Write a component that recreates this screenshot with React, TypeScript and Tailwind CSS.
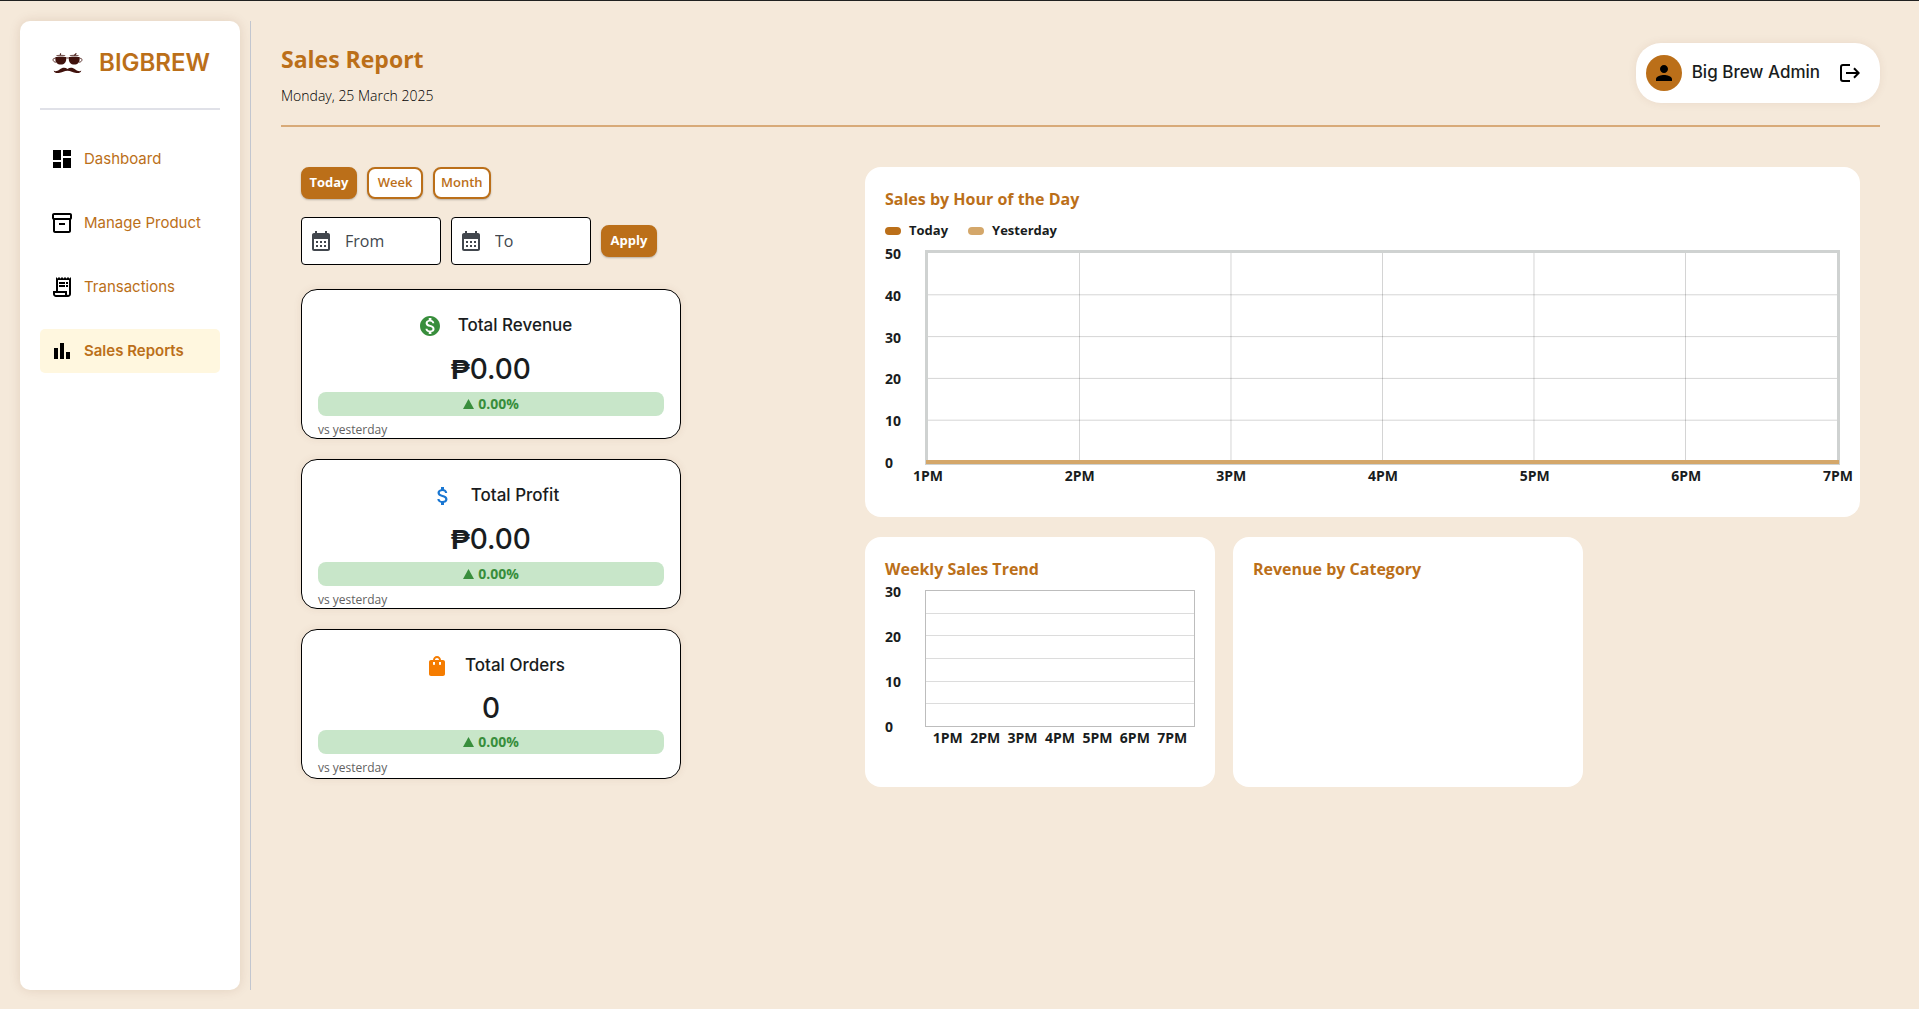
import type { ReactNode } from "react";
import type { IconType } from "react-icons";
import {
  MdAttachMoney,
  MdBarChart,
  MdCalendarMonth,
  MdDashboard,
  MdMonetizationOn,
  MdOutlineInventory2,
  MdOutlineReceiptLong,
  MdPerson,
  MdShoppingBag,
} from "react-icons/md";

const HOURS = ["1PM", "2PM", "3PM", "4PM", "5PM", "6PM", "7PM"];

const NAV: { label: string; icon: IconType; active?: boolean }[] = [
  { label: "Dashboard", icon: MdDashboard },
  { label: "Manage Product", icon: MdOutlineInventory2 },
  { label: "Transactions", icon: MdOutlineReceiptLong },
  { label: "Sales Reports", icon: MdBarChart, active: true },
];

function Logo() {
  return (
    <svg viewBox="0 0 92 64" className="h-[21px] w-[31px] shrink-0" fill="#40120d" aria-hidden="true">
      <path d="M9 12h33v6c0 10-6 17-16.500 17S9 28 9 18z" />
      <path d="M50 12h33v6c0 10-6 17-16.500 17S50 28 50 18z" />
      <ellipse cx="25.500" cy="8" rx="14" ry="2.500" opacity="0.7" />
      <ellipse cx="66.500" cy="8" rx="14" ry="2.500" opacity="0.7" />
      <path d="M9 17c-5-2-7 1-7 4s3 7 9 7M83 17c5-2 7 1 7 4s-3 7-9 7" fill="none" stroke="#40120d" strokeWidth="2.500" />
      <path d="M24 6l1-5M67 7l6-6" fill="none" stroke="#40120d" strokeWidth="3.500" />
      <path d="M42 14h8v2.500h-8z" />
      <path d="M4 53c5 5 12 1 18-3 8-6 17-7 24-1 7-6 16-5 24 1 6 4 13 8 18 3-1 7-8 9-15 8-10-1-18-7-27-7s-17 6-27 7c-7 1-14-1-15-8z" />
    </svg>
  );
}

function LogoutIcon() {
  return (
    <svg viewBox="0 0 20 18" className="h-[18px] w-5" fill="none" stroke="currentColor" strokeWidth="2" aria-hidden="true">
      <path d="M10 1H3a2 2 0 0 0-2 2v12a2 2 0 0 0 2 2h7" />
      <path d="M6 9h12M14 4.300L18.600 9 14 13.700" />
    </svg>
  );
}

function Sidebar() {
  return (
    <aside className="flex w-[220px] shrink-0 flex-col rounded-[10px] bg-white p-5 font-['Inter',sans-serif] shadow-[0_0_12px_rgba(100,50,0,0.13)]">
      <div className="flex h-11 items-center justify-between pr-2.5 pl-3">
        <Logo />
        <span className="text-2xl font-semibold text-[#bb6f19]">BIGBREW</span>
      </div>
      <hr className="mt-[23px] border-t-2 border-[#e0e1e8]" />
      <nav className="mt-[27px] flex flex-col gap-5">
        {NAV.map(({ label, icon: Icon, active }) => (
          <a
            key={label}
            href="#"
            className={`flex h-11 items-center gap-2.5 rounded-[5px] px-2.5 text-[15px] whitespace-nowrap text-[#bb6f19] ${
              active ? "bg-[#fff7df] font-semibold" : ""
            }`}
          >
            <Icon className="size-6 text-black" aria-hidden="true" />
            {label}
          </a>
        ))}
      </nav>
    </aside>
  );
}

function Header() {
  return (
    <header className="flex items-start justify-between border-b-2 border-[#d8aa78] pt-[22px] pb-[17px]">
      <div>
        <h1 className="text-[23px] leading-8 font-bold text-[#bb6f19]">Sales Report</h1>
        <p className="mt-[9px] text-sm leading-6 font-light text-black">Monday, 25 March 2025</p>
      </div>
      <div className="flex h-[60px] items-center rounded-[25px] bg-white pr-5 pl-2.5 font-['Inter',sans-serif] shadow-[0_0_10px_rgba(100,50,0,0.08)]">
        <span className="flex size-9 items-center justify-center rounded-full bg-[#bb6f19]">
          <MdPerson className="size-6 text-black" aria-hidden="true" />
        </span>
        <span className="ml-2.5 text-[17px] font-medium text-[#191c20]">Big Brew Admin</span>
        <button type="button" aria-label="Log out" className="ml-5 text-black">
          <LogoutIcon />
        </button>
      </div>
    </header>
  );
}

function ActionButton({ children, filled }: { children: ReactNode; filled?: boolean }) {
  return (
    <button
      type="button"
      className={`h-8 min-w-14 rounded-lg border-2 border-[#bb6f19] px-1.5 text-[13px] shadow-[0_1px_2px_rgba(0,0,0,0.25)] ${
        filled ? "bg-[#bb6f19] font-bold text-white" : "bg-white font-semibold text-[#bb6f19]"
      }`}
    >
      {children}
    </button>
  );
}

function DateField({ label }: { label: string }) {
  return (
    <label className="flex h-12 w-[140px] items-center gap-3 rounded border border-black bg-white px-[7px]">
      <MdCalendarMonth className="size-6 shrink-0 text-[#42474e]" aria-hidden="true" />
      <input
        type="text"
        aria-label={label}
        placeholder={label}
        className="w-full min-w-0 bg-transparent text-base text-[#42474e] outline-none placeholder:text-[#42474e]"
      />
    </label>
  );
}

function StatCard({
  icon: Icon,
  iconClass,
  title,
  amount,
  peso,
}: {
  icon: IconType;
  iconClass: string;
  title: string;
  amount: string;
  peso?: boolean;
}) {
  return (
    <section className="flex min-h-[150px] w-[380px] flex-col rounded-2xl border border-black bg-white px-4 pt-4 shadow-[0_0_8px_rgba(100,50,0,0.08)]">
      <div className="flex h-10 items-center justify-center gap-4 pl-2 font-['Inter',sans-serif]">
        <Icon className={`size-6 ${iconClass}`} aria-hidden="true" />
        <h2 className="text-[17px] font-medium text-[#191c20]">{title}</h2>
      </div>
      <p
        className={`mt-0.5 text-center font-['Inter',sans-serif] text-[28px] font-medium text-[#191c20] ${
          peso ? "leading-[42px]" : "leading-10"
        }`}
      >
        {peso && <span className="font-['Open_Sans',sans-serif] leading-none font-bold">₱</span>}
        {amount}
      </p>
      <div className="mt-0.5 flex h-6 items-center justify-center gap-1 rounded-lg bg-[#c8e6c9] text-sm font-bold text-[#388e3c]">
        <svg viewBox="0 0 11 10" className="h-2.5 w-[11px]" fill="currentColor" aria-hidden="true">
          <path d="M5.500 0L11 10H0z" />
        </svg>
        0.00%
      </div>
      <p className="mt-1.5 text-xs leading-4 text-[#616161]">vs yesterday</p>
    </section>
  );
}

function PanelTitle({ children }: { children: ReactNode }) {
  return <h2 className="text-base leading-6 font-bold text-[#bb6f19]">{children}</h2>;
}

function Legend({ color, label }: { color: string; label: string }) {
  return (
    <li className="flex items-center gap-2">
      <span className={`h-2 w-4 rounded ${color}`} />
      {label}
    </li>
  );
}

function YAxis({ labels, className }: { labels: string[]; className: string }) {
  return (
    <div className={`flex w-10 shrink-0 flex-col justify-between ${className}`}>
      {labels.map((l) => (
        <span key={l} className="leading-4">
          {l}
        </span>
      ))}
    </div>
  );
}

function HourlyChart() {
  return (
    <section className="rounded-2xl bg-white px-5 pt-5 pb-[31px]">
      <PanelTitle>Sales by Hour of the Day</PanelTitle>
      <ul className="mt-2 flex h-6 gap-5 text-[13px] font-bold text-[#191c20]">
        <Legend color="bg-[#bb6f19]" label="Today" />
        <Legend color="bg-[#d4a76a]" label="Yesterday" />
      </ul>
      <div className="mt-[3px] text-sm font-bold text-[#191c20]">
        <div className="flex">
          <YAxis labels={["50", "40", "30", "20", "10", "0"]} className="h-[225px]" />
          <div className="mt-1 h-[215px] flex-1 border-3 border-[#cfd2d1]">
            <svg width="100%" height="209" className="block overflow-visible" aria-hidden="true">
              {[1, 2, 3, 4, 5].map((i) => (
                <line key={`v${i}`} x1={`${(i * 100) / 6}%`} x2={`${(i * 100) / 6}%`} y1="0" y2="100%" stroke="#000" strokeOpacity="0.17" />
              ))}
              {[1, 2, 3, 4].map((i) => (
                <line key={`h${i}`} x1="0" x2="100%" y1={`${i * 20}%`} y2={`${i * 20}%`} stroke="#000" strokeOpacity="0.17" />
              ))}
              <line x1="0" x2="100%" y1="209" y2="209" stroke="#d4a76a" strokeWidth="4" strokeLinecap="square" />
            </svg>
          </div>
        </div>
        <div className="-mt-[5px] -mr-3.5 ml-[27px] flex justify-between">
          {HOURS.map((h) => (
            <span key={h} className="w-8 text-center leading-5">
              {h}
            </span>
          ))}
        </div>
      </div>
    </section>
  );
}

function WeeklyChart() {
  return (
    <section className="h-[250px] w-[350px] rounded-2xl bg-white p-5">
      <PanelTitle>Weekly Sales Trend</PanelTitle>
      <div className="mt-[3px] text-sm font-bold text-[#191c20]">
        <div className="flex">
          <YAxis labels={["30", "20", "10", "0"]} className="h-[151px]" />
          <div className="mt-1.5 flex h-[137px] flex-1 flex-col divide-y divide-[#dcdcdc] border border-[#bdbdbd]">
            {[0, 1, 2, 3, 4, 5].map((i) => (
              <div key={i} className="flex-1" />
            ))}
          </div>
        </div>
        <div className="-mt-[7px] ml-10 grid grid-cols-7 px-1">
          {HOURS.map((h) => (
            <span key={h} className="text-center leading-5">
              {h}
            </span>
          ))}
        </div>
      </div>
    </section>
  );
}

export default function App() {
  return (
    <div className="flex min-h-screen border-t border-[#202020] bg-[#f5e9da] py-5 pr-[39px] pb-[19px] pl-5 font-['Open_Sans','Noto_Sans',sans-serif]">
      <Sidebar />
      <div className="mr-[30px] ml-2.5 w-px shrink-0 bg-[#c2c6cf]" />
      <main className="min-w-0 flex-1">
        <Header />
        <div className="flex gap-5 px-5 pt-10">
          <div className="w-[544px] shrink-0">
            <div className="flex gap-2.5">
              <ActionButton filled>Today</ActionButton>
              <ActionButton>Week</ActionButton>
              <ActionButton>Month</ActionButton>
            </div>
            <div className="mt-[18px] flex items-center gap-2.5">
              <DateField label="From" />
              <DateField label="To" />
              <ActionButton filled>Apply</ActionButton>
            </div>
            <div className="mt-6 flex flex-col gap-5">
              <StatCard icon={MdMonetizationOn} iconClass="text-[#388e3c]" title="Total Revenue" amount="0.00" peso />
              <StatCard icon={MdAttachMoney} iconClass="text-[#1976d2]" title="Total Profit" amount="0.00" peso />
              <StatCard icon={MdShoppingBag} iconClass="text-[#f57c00]" title="Total Orders" amount="0" />
            </div>
          </div>
          <div className="flex min-w-0 flex-1 flex-col gap-5">
            <HourlyChart />
            <div className="flex gap-[18px]">
              <WeeklyChart />
              <section className="h-[250px] w-[350px] rounded-2xl bg-white p-5">
                <PanelTitle>Revenue by Category</PanelTitle>
              </section>
            </div>
          </div>
        </div>
      </main>
    </div>
  );
}
